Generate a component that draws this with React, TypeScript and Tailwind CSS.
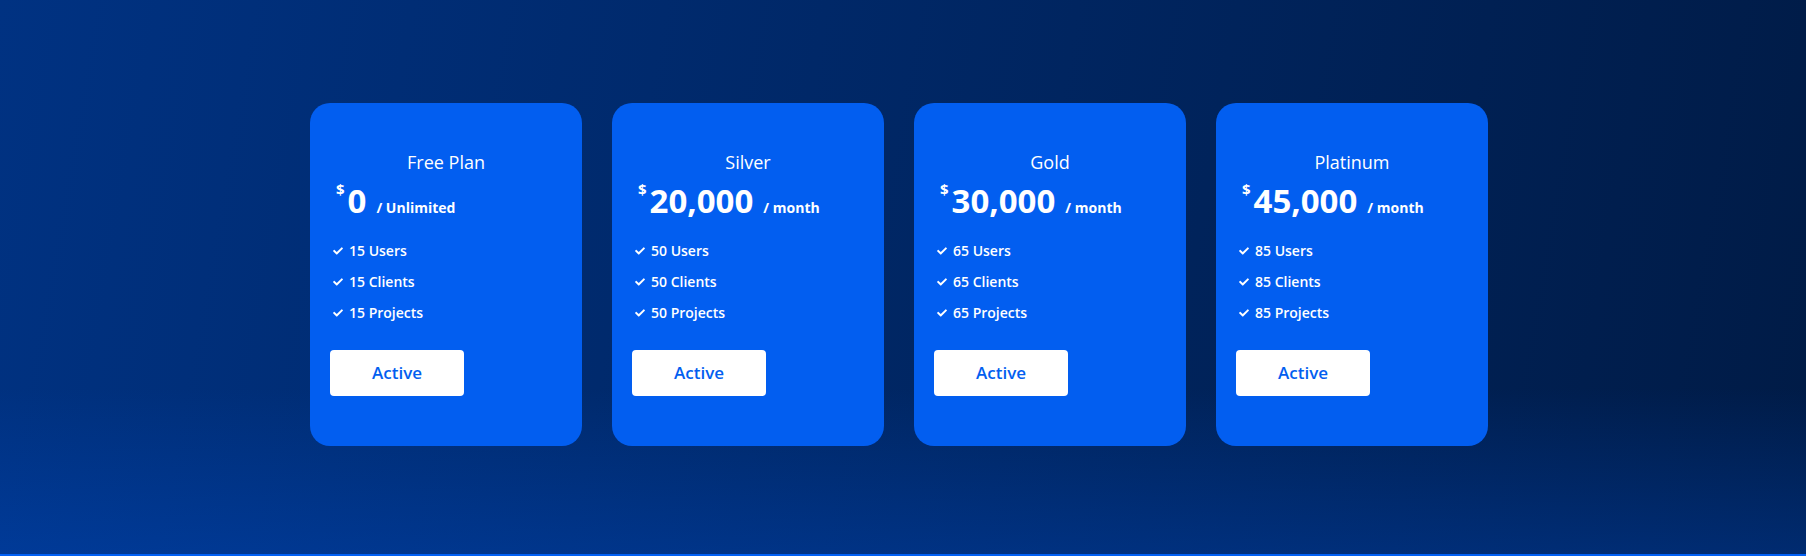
import { FaCheck } from "react-icons/fa"

const plans = [
  { name: "Free Plan", price: "0", period: "/ Unlimited", count: 15 },
  { name: "Silver", price: "20,000", period: "/ month", count: 50 },
  { name: "Gold", price: "30,000", period: "/ month", count: 65 },
  { name: "Platinum", price: "45,000", period: "/ month", count: 85 },
]

function PlanCard({ plan }: { plan: (typeof plans)[number] }) {
  return (
    <div className="w-[272px] h-[343px] rounded-[20px] bg-[#025ef0] px-5 pt-[47px] text-white">
      <h3 className="text-center text-[18px] leading-6 font-medium">{plan.name}</h3>
      <div className="flex items-baseline ml-[6px] mt-[7px] h-[40px]">
        <span className="self-start text-[15px] font-bold leading-none mt-[1px]">$</span>
        <span className="text-[33px] font-bold leading-[40px] ml-[3px]">{plan.price}</span>
        <span className="text-[14px] font-bold ml-[10px]">{plan.period}</span>
      </div>
      <ul className="mt-[20px] ml-[3px] flex flex-col gap-[11px]">
        {["Users", "Clients", "Projects"].map((item) => (
          <li key={item} className="flex items-center gap-[6px] text-[14px] font-semibold leading-5">
            <FaCheck className="size-[10px]" />
            {plan.count} {item}
          </li>
        ))}
      </ul>
      <button className="mt-[27px] w-[134px] h-[46px] rounded bg-white text-[#025ef0] text-[17px] font-semibold">
        Active
      </button>
    </div>
  )
}

export default function App() {
  return (
    <div
      className="h-[556px] border-b-2 border-[#0060f5] bg-[linear-gradient(to_top,rgba(0,80,210,0.3),transparent_30%),linear-gradient(100deg,#003282,#001b46)] pt-[103px] pr-2 flex justify-center gap-[30px]"
      style={{ fontFamily: '"Open Sans", sans-serif' }}
    >
      {plans.map((plan) => (
        <PlanCard key={plan.name} plan={plan} />
      ))}
    </div>
  )
}
